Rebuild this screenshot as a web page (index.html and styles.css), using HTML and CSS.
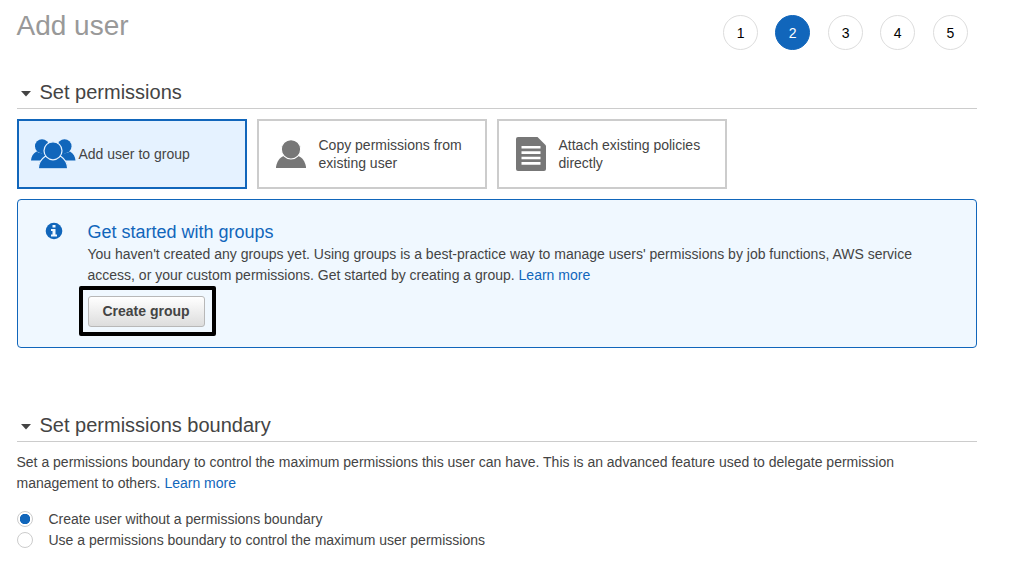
FILE: index.html
```html
<!DOCTYPE html>
<html lang="en">
<head>
<meta charset="utf-8">
<title>Add user</title>
<link rel="stylesheet" href="styles.css">
</head>
<body>
<main class="page">
  <header class="header">
    <h1 class="title">Add user</h1>
    <ol class="steps">
      <li class="step">1</li>
      <li class="step step-current">2</li>
      <li class="step">3</li>
      <li class="step">4</li>
      <li class="step">5</li>
    </ol>
  </header>

  <section>
    <h2 class="section-title"><svg class="caret" width="10" height="6" viewBox="0 0 10 6"><path d="M0 0H10L5 5.5Z"/></svg>Set permissions</h2>
    <div class="options">
      <div class="option option-selected">
        <span class="option-icon">
          <svg width="46" height="30" viewBox="0 0 46 30">
            <circle cx="11" cy="7.200" r="7"/><circle cx="33.500" cy="7.200" r="7"/>
            <path d="M0 21.500C.3 17.500 2 14.500 5.500 12.500Q10 15.500 15 13L20 21.500ZM44.500 21.500C44.200 17.500 42.500 14.500 39 12.500Q34.500 15.500 29.500 13L24.500 21.500Z"/>
            <path class="halo" d="M7.300 29.800C7.500 24 9.500 20.500 14 17.500H30C34.500 20.500 36.500 24 36.700 29.800Z"/>
            <circle class="halo" cx="22" cy="11.800" r="9"/>
          </svg>
        </span>
        <span>Add user to group</span>
      </div>
      <div class="option">
        <span class="option-icon">
          <svg width="30" height="28" viewBox="0 0 30 28">
            <path d="M0 28V27C1 21 4 17.500 7.500 16H22.500C26 17.500 29 21 30 27V28Z"/>
            <circle class="gap" cx="15" cy="9.300" r="9.700"/>
          </svg>
        </span>
        <span>Copy permissions from<br>existing user</span>
      </div>
      <div class="option">
        <span class="option-icon">
          <svg width="30" height="34" viewBox="0 0 30 34">
            <path d="M2 0H21.500L30 8.500V32Q30 34 28 34H2Q0 34 0 32V2Q0 0 2 0Z"/>
            <path class="lines" d="M5.500 10.200H24.500M5.500 15.600H24.500M5.500 21H24.500M5.500 26.400H24.500"/>
          </svg>
        </span>
        <span>Attach existing policies<br>directly</span>
      </div>
    </div>

    <div class="panel">
      <svg class="info" width="17" height="18" viewBox="0 0 17 18">
        <circle cx="8" cy="9" r="8.300"/>
        <path d="M6.500 3H9.500V5.500H6.500ZM5 7H9.500V12.500H11V14.500H5V12.500H6.500V9H5Z"/>
      </svg>
      <div>
        <h3 class="panel-title">Get started with groups</h3>
        <p class="text">You haven't created any groups yet. Using groups is a best-practice way to manage users' permissions by job functions, AWS service<br>access, or your custom permissions. Get started by creating a group. <a class="link">Learn more</a></p>
        <div class="highlight"><button class="button">Create group</button></div>
      </div>
    </div>
  </section>

  <section class="boundary">
    <h2 class="section-title"><svg class="caret" width="10" height="6" viewBox="0 0 10 6"><path d="M0 0H10L5 5.5Z"/></svg>Set permissions boundary</h2>
    <p class="text intro">Set a permissions boundary to control the maximum permissions this user can have. This is an advanced feature used to delegate permission<br>management to others. <a class="link">Learn more</a></p>
    <label class="choice"><span class="radio radio-on"></span>Create user without a permissions boundary</label>
    <label class="choice"><span class="radio"></span>Use a permissions boundary to control the maximum user permissions</label>
  </section>
</main>
</body>
</html>
```

FILE: styles.css
```css
* { box-sizing: border-box; }
body {
  margin: 0;
  background: #fff;
  color: #444;
  font: 14px/21px "Liberation Sans", Arial, sans-serif;
  overflow: hidden;
}
h1, h2, h3, p, ol { margin: 0; padding: 0; font-weight: 400; }
.page { width: 960px; margin-left: 17px; }
.header {
  display: flex;
  justify-content: space-between;
  height: 80px;
  padding: 9px 9px 0 0;
}
.title { margin: 1px 0 0 -0.5px; font-size: 28px; line-height: 32px; color: #999; }
.steps { display: flex; gap: 17.45px; margin-top: 6px; list-style: none; }
.step {
  width: 35px;
  height: 35px;
  border: 1px solid #ddd;
  border-radius: 50%;
  color: #000;
  line-height: 35px;
  text-align: center;
}
.step:nth-child(2), .step:nth-child(4) { margin: 0 0.5px 0 -0.5px; }
.step-current { background: #1166bb; border-color: #1166bb; color: #fff; }
.section-title {
  display: flex;
  height: 29px;
  padding-left: 4px;
  border-bottom: 1px solid #ccc;
  font-size: 20px;
  line-height: 24px;
}
.caret { margin: 11px 8.5px 0 0; fill: #444; }
.options { display: flex; gap: 10px; margin-top: 10px; }
.option {
  display: flex;
  align-items: center;
  width: 230px;
  height: 70px;
  border: 2px solid #ccc;
  line-height: 18px;
}
.option-selected { background: #e5f2ff; border-color: #1166bb; }
.option-icon {
  display: flex;
  width: 59.5px;
  padding-left: 17px;
  flex: none;
  fill: #777;
}
.option-selected .option-icon { padding-left: 12px; fill: #1166bb; }
.halo { stroke: #e5f2ff; stroke-width: 1.2px; }
.gap { stroke: #fff; stroke-width: 1.2px; }
.lines { fill: none; stroke: #fff; stroke-width: 2.6px; }
.panel {
  display: flex;
  height: 149px;
  margin-top: 10px;
  padding: 22px 0 0 27.5px;
  border: 1px solid #1166bb;
  border-radius: 4px;
  background: #f0f8ff;
}
.info { flex: none; margin: 0 25px 0 0; overflow: visible; fill: #1166bb; }
.info path { fill: #f0f8ff; }
.panel-title { margin-bottom: 1px; color: #1166bb; font-size: 18px; line-height: 21px; }
.text { white-space: nowrap; }
.link { color: #1166bb; }
.highlight {
  width: 137px;
  height: 50px;
  margin: -0.5px 0 0 -9px;
  padding: 6px 5px;
  border: 4px solid #000;
  border-radius: 2px;
}
.button {
  display: block;
  width: 117px;
  height: 31px;
  padding: 0;
  border: 1px solid #b8b8b8;
  border-radius: 3px;
  background: linear-gradient(#fff, #ddd);
  color: #444;
  font: bold 14px/28px "Liberation Sans", Arial, sans-serif;
}
.boundary { margin-top: 65px; }
.intro { margin: 10px 0 15px -0.5px; }
.choice { display: flex; align-items: flex-start; gap: 15.5px; }
.radio {
  width: 16px;
  height: 16px;
  margin-top: 2px;
  border: 1px solid #ccc;
  border-radius: 50%;
}
.radio-on { background: radial-gradient(circle, #1166bb 4.9px, #fff 5.5px); }
```
